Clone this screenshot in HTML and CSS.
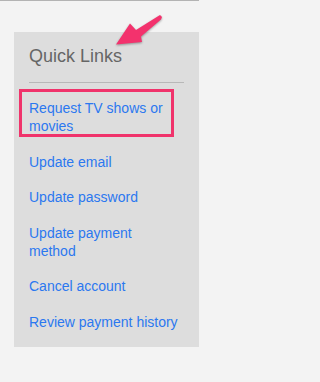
FILE: index.html
```html
<!DOCTYPE html>
<html>
<head>
<meta charset="utf-8">
<link rel="stylesheet" href="styles.css">
</head>
<body>
<div class="topline"></div>
<aside class="panel">
  <h2 class="title">Quick Links</h2>
  <hr class="divider">
  <ul class="links">
    <li class="item highlighted"><a href="#">Request TV shows or movies</a><span class="callout"></span></li>
    <li class="item"><a href="#">Update email</a></li>
    <li class="item"><a href="#">Update password</a></li>
    <li class="item"><a href="#">Update payment method</a></li>
    <li class="item"><a href="#">Cancel account</a></li>
    <li class="item"><a href="#">Review payment history</a></li>
  </ul>
</aside>
<svg class="arrow" width="218" height="60" viewBox="0 0 218 60">
  <polygon points="116,44.5 130,23.5 136,30 160,15 162,17 161,19.5 141,36.5 142,42" fill="#f3326d"/>
</svg>
</body>
</html>
```
FILE: styles.css
```css
html, body {
  margin: 0;
  padding: 0;
  background: #f3f3f3;
  font-family: "Liberation Sans", Arial, sans-serif;
}
body {
  position: relative;
  width: 218px;
  height: 382px;
  overflow: hidden;
}
.topline {
  width: 199px;
  height: 0;
  border-top: 1px solid #b3b3b3;
}
.panel {
  margin: 31px 0 0 14px;
  width: 185px;
  box-sizing: border-box;
  background: #dddddd;
  padding: 14px 15px 16px;
}
.title {
  margin: 0;
  font-size: 18px;
  font-weight: normal;
  line-height: 20px;
  color: #666666;
}
.divider {
  margin: 16px 0 0;
  border: 0;
  height: 1px;
  background: #b8b8b8;
}
.links {
  list-style: none;
  margin: 16px 0 0;
  padding: 0 6px 0 0;
  display: flex;
  flex-direction: column;
  gap: 17px;
}
.item {
  position: relative;
  font-size: 14px;
  line-height: 18.4px;
}
.item a {
  color: #2b78f0;
  text-decoration: none;
}
.callout {
  position: absolute;
  left: -10px;
  top: -10px;
  width: 155px;
  height: 48px;
  box-sizing: border-box;
  border: 3px solid #f0336b;
  pointer-events: none;
}
.arrow {
  position: absolute;
  left: 0;
  top: 0;
  filter: drop-shadow(0 1px 1px rgba(0, 0, 0, 0.35));
}
```
